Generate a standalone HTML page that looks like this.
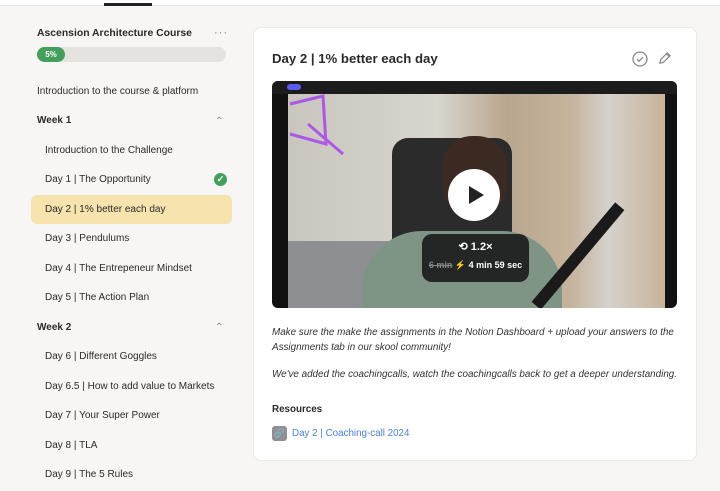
<!DOCTYPE html>
<html><head><meta charset="utf-8"><style>
*{margin:0;padding:0;box-sizing:border-box}
body{width:720px;height:491px;overflow:hidden;background:#f7f6f4;font-family:"Liberation Sans",sans-serif;color:#2a2a2a;position:relative}
.top{position:absolute;left:0;top:0;width:720px;height:6px;background:#fff;border-bottom:1px solid #e6e4e0}
.tab{position:absolute;left:104px;top:3px;width:48px;height:3px;background:#222}
.t{position:absolute;font-size:10px;white-space:nowrap}
.h{font-weight:bold}
.card{position:absolute;left:253px;top:27px;width:444px;height:434px;background:#fff;border-radius:8px;border:1px solid #ebe9e5}
.vid{position:absolute;left:272px;top:81px;width:405px;height:227px;background:#111;border-radius:6px;overflow:hidden}
</style></head><body>
<div class="top"></div><div class="tab"></div>
<div class="t h" style="left:37px;top:28px;font-size:10.4px">Ascension Architecture Course</div>
<div class="t" style="left:214px;top:27px;color:#777;font-size:11px;letter-spacing:1px">···</div>
<div style="position:absolute;left:37px;top:47px;width:189px;height:15px;border-radius:8px;background:#e4e3e0"></div>
<div style="position:absolute;left:37px;top:47px;width:28px;height:15px;border-radius:8px;background:#43a05a;color:#fff;font-size:8px;font-weight:bold;text-align:center;line-height:15px">5%</div>
<div class="t" style="left:37px;top:86px">Introduction to the course &amp; platform</div>
<div class="t h" style="left:37px;top:115px">Week 1</div>
<div class="t" style="left:215px;top:116px;color:#888">&#8963;</div>
<div class="t" style="left:45px;top:145px">Introduction to the Challenge</div>
<div class="t" style="left:45px;top:174px">Day 1 | The Opportunity</div>
<div style="position:absolute;left:214px;top:173px;width:13px;height:13px;border-radius:50%;background:#43a05a;color:#fff;font-size:9px;text-align:center;line-height:13px;font-weight:bold">✓</div>
<div style="position:absolute;left:31px;top:195px;width:201px;height:29px;border-radius:6px;background:#f6e3ad"></div>
<div class="t" style="left:45px;top:204px">Day 2 | 1% better each day</div>
<div class="t" style="left:45px;top:233px">Day 3 | Pendulums</div>
<div class="t" style="left:45px;top:263px">Day 4 | The Entrepeneur Mindset</div>
<div class="t" style="left:45px;top:292px">Day 5 | The Action Plan</div>
<div class="t h" style="left:37px;top:322px">Week 2</div>
<div class="t" style="left:215px;top:322px;color:#888">&#8963;</div>
<div class="t" style="left:45px;top:351px">Day 6 | Different Goggles</div>
<div class="t" style="left:45px;top:381px">Day 6.5 | How to add value to Markets</div>
<div class="t" style="left:45px;top:410px">Day 7 | Your Super Power</div>
<div class="t" style="left:45px;top:440px">Day 8 | TLA</div>
<div class="t" style="left:45px;top:469px">Day 9 | The 5 Rules</div>

<div class="card"></div>
<div class="t h" style="left:272px;top:51px;font-size:13.2px">Day 2 | 1% better each day</div>
<svg style="position:absolute;left:632px;top:51px" width="16" height="16" viewBox="0 0 16 16"><circle cx="8" cy="8" r="7" fill="none" stroke="#888" stroke-width="1.3"/><path d="M5 8.2l2 2 4-4" fill="none" stroke="#888" stroke-width="1.3"/></svg>
<svg style="position:absolute;left:657px;top:51px" width="15" height="15" viewBox="0 0 16 16"><path d="M3 13l1-4 7-7 3 3-7 7z M10 3l3 3" fill="none" stroke="#888" stroke-width="1.3" stroke-linejoin="round"/></svg>
<div class="vid">
<div style="position:absolute;left:16px;top:13px;width:377px;height:214px;background:linear-gradient(90deg,#c9c6bd 0%,#d8d5cd 40%,#b9a68e 58%,#c5b39c 75%,#d4d2cc 85%,#c9b39a 100%)"></div>
<div style="position:absolute;left:16px;top:160px;width:100px;height:67px;background:#8e8f93"></div>
<div style="position:absolute;left:120px;top:57px;width:120px;height:120px;border-radius:16px;background:#2b2b2c"></div>
<div style="position:absolute;left:90px;top:150px;width:200px;height:80px;border-radius:60px 60px 0 0;background:#7e9484"></div>
<div style="position:absolute;left:170px;top:55px;width:65px;height:80px;border-radius:30px;background:#3a2a22"></div>
<svg style="position:absolute;left:16px;top:13px" width="60" height="70"><path d="M2 10 L35 2 L38 50 L2 40 M20 30 L55 60" fill="none" stroke="#a43cf0" stroke-width="3" opacity=".8"/></svg>
<div style="position:absolute;left:300px;top:110px;width:12px;height:130px;background:#1a1a1a;transform:rotate(40deg)"></div>
<div style="position:absolute;left:0;top:0;width:405px;height:13px;background:#1c1c1c"></div>
<div style="position:absolute;left:15px;top:3px;width:14px;height:6px;border-radius:3px;background:#5b5cf0"></div>
<div style="position:absolute;left:176px;top:88px;width:52px;height:52px;border-radius:50%;background:#fff"></div>
<div style="position:absolute;left:197px;top:105px;width:0;height:0;border-left:15px solid #222;border-top:9px solid transparent;border-bottom:9px solid transparent"></div>
<div style="position:absolute;left:150px;top:153px;width:107px;height:48px;border-radius:10px;background:rgba(25,25,25,.9);color:#fff;text-align:center;font-weight:bold">
<div style="font-size:11px;margin-top:6px">⟲ 1.2×</div>
<div style="font-size:9px;margin-top:7px"><s style="color:#888">6 min</s> <span style="color:#e9c23a">⚡</span> 4 min 59 sec</div></div>
</div>
<div class="t" style="left:272px;top:325px;font-style:italic;color:#333;line-height:15px;font-size:9.85px">Make sure the make the assignments in the Notion Dashboard + upload your answers to the<br>Assignments tab in our skool community!</div>
<div class="t" style="left:272px;top:369px;font-style:italic;color:#333;font-size:9.85px">We've added the coachingcalls, watch the coachingcalls back to get a deeper understanding.</div>
<div class="t h" style="left:272px;top:404px;font-size:9.8px">Resources</div>
<div style="position:absolute;left:272px;top:426px;width:15px;height:15px;border-radius:3px;background:#909090;color:#fff;font-size:9px;text-align:center;line-height:15px">🔗</div>
<div class="t" style="left:292px;top:428px;color:#4a7fe0;font-size:9.8px">Day 2 | Coaching-call 2024</div>
</body></html>
